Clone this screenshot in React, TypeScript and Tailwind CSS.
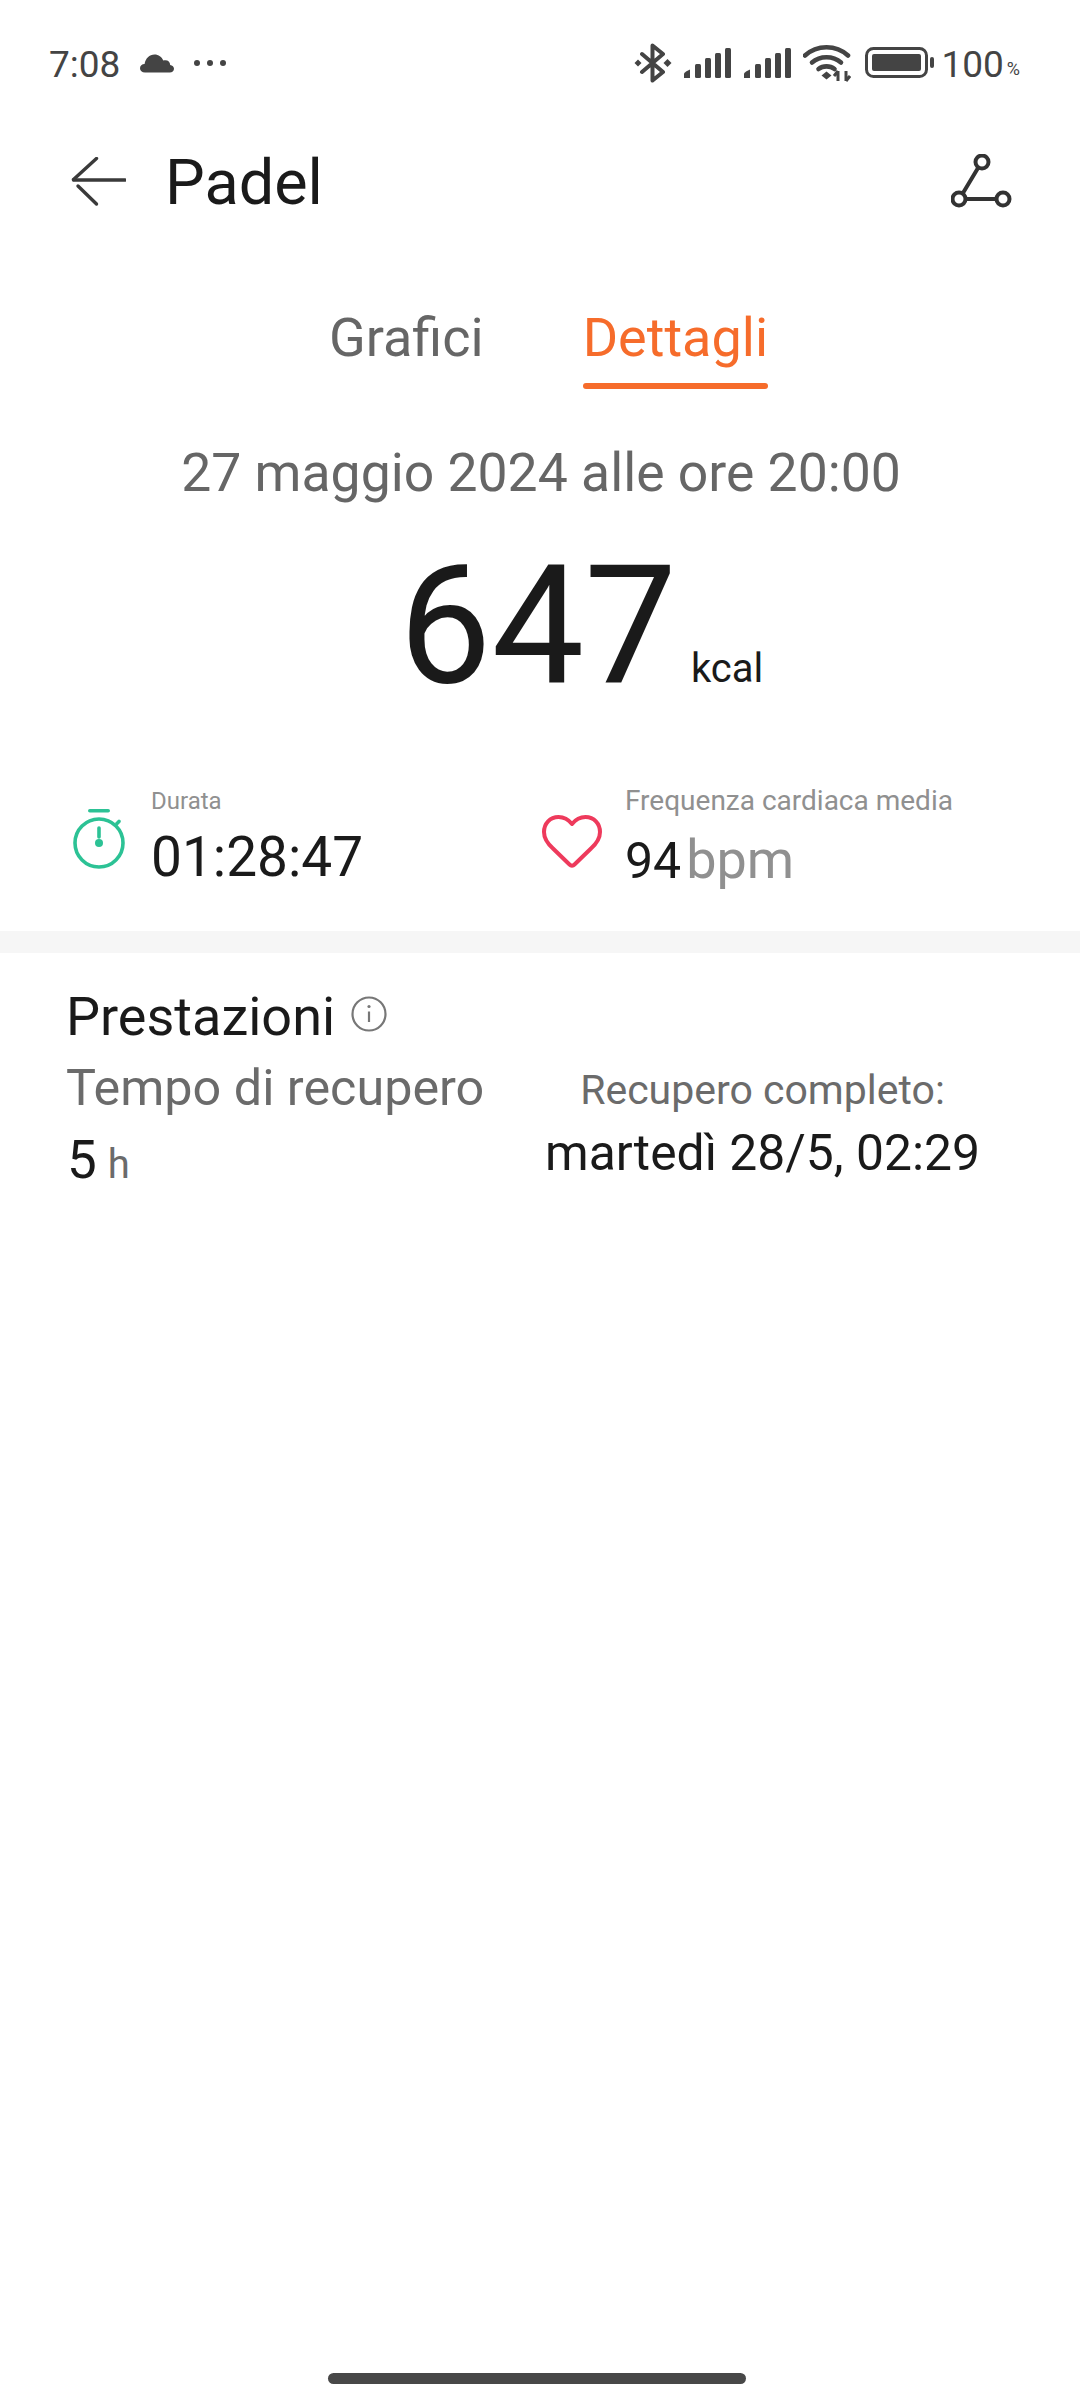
const font = "font-['Roboto',sans-serif]";

function Cloud() {
  return (
    <svg width="34" height="20" viewBox="0 0 34 20" className="text-[#444]">
      <path
        fill="currentColor"
        d="M5 19.5C2 19.5 0 17.6 0 15.2C0 12.8 2 11 4.6 11C5.4 5.6 9.4 1.5 14.5 1.5C18.6 1.5 21.8 3.9 23.3 7.6C24 7.3 24.7 7.2 25.4 7.2C28.2 7.2 30 9.3 30.2 11.9C32.4 12.2 34 13.7 34 15.7C34 17.9 32.2 19.5 29.8 19.5Z"
      />
    </svg>
  );
}

function Bluetooth() {
  return (
    <svg width="38" height="40" viewBox="0 0 38 40" fill="none">
      <path
        d="M8 11L29 29L18.5 37.5V2.5L29 11L8 29"
        stroke="#444"
        strokeWidth="4"
        strokeLinejoin="round"
        strokeLinecap="round"
      />
      <path d="M0.5 20L4 16.5L7.5 20L4 23.5Z M29.5 20L33.5 16L37.5 20L33.5 24Z" fill="#444" />
    </svg>
  );
}

function Signal() {
  return (
    <svg width="48" height="32" viewBox="0 0 48 32" fill="#444">
      <path d="M0 31V27C0 25.5 3.5 23.5 6 22.5V31Z" />
      <rect x="11" y="17" width="6" height="14" rx="1.5" />
      <rect x="21" y="11" width="6" height="20" rx="1.5" />
      <rect x="31" y="6" width="6" height="25" rx="1.5" />
      <rect x="41" y="1" width="6" height="30" rx="1.5" />
    </svg>
  );
}

function Wifi() {
  return (
    <svg width="48" height="38" viewBox="0 0 48 38" fill="none">
      <path d="M2 11.5C14 0.5 33 0.5 45 11.5" stroke="#444" strokeWidth="4.6" strokeLinecap="round" />
      <path d="M9 18.5C17 11.5 30 11.5 38 18.5" stroke="#444" strokeWidth="4.6" strokeLinecap="round" />
      <path d="M15.5 25C20 21.5 27 21.5 31.5 25" stroke="#444" strokeWidth="4.6" strokeLinecap="round" />
      <path d="M18.5 31.5L23.5 27.5L28.5 31.5L23.5 35.5Z" fill="#444" />
      <path d="M35 27V37M31 32L35 27M43 27V37M43 37L47 32" stroke="#444" strokeWidth="3" />
    </svg>
  );
}

function Battery() {
  return (
    <svg width="70" height="32" viewBox="0 0 70 32" fill="none">
      <rect x="1.5" y="1.5" width="60" height="28" rx="7" stroke="#444" strokeWidth="3" />
      <rect x="7" y="7" width="49" height="17" rx="2" fill="#444" />
      <rect x="65" y="10" width="4" height="11" rx="2" fill="#444" />
    </svg>
  );
}

function Back() {
  return (
    <svg width="56" height="50" viewBox="0 0 56 50" fill="none" stroke="#3a3a3a" strokeWidth="3.4" strokeLinecap="round">
      <path d="M3.5 23H55" />
      <path d="M3.5 22.5L26.5 1.5" />
      <path d="M8 29L26.5 47" />
    </svg>
  );
}

function Route() {
  return (
    <svg width="62" height="56" viewBox="0 0 62 56" fill="none" stroke="#333" strokeWidth="4">
      <circle cx="31" cy="8" r="6.5" />
      <circle cx="8" cy="45" r="6.5" />
      <circle cx="52" cy="45" r="6.5" />
      <path d="M27 14L12 39M14.5 45H45.5" />
    </svg>
  );
}

function Stopwatch() {
  return (
    <svg width="52" height="60" viewBox="0 0 52 60" fill="none" stroke="#2cc295">
      <rect x="15" y="0" width="22" height="3.6" rx="1.8" fill="#2cc295" stroke="none" />
      <circle cx="26" cy="34" r="24" strokeWidth="3.6" />
      <path d="M44 14.5L46 12.5" strokeWidth="3.6" strokeLinecap="round" />
      <path d="M26 19V28" strokeWidth="3.6" strokeLinecap="round" />
      <circle cx="26" cy="34" r="4" fill="#2cc295" stroke="none" />
    </svg>
  );
}

function Heart() {
  return (
    <svg width="62" height="56" viewBox="0 0 62 56" fill="none">
      <path
        d="M31 10C27 5 23 3 17.5 3C9 3 3 9.5 3 18C3 25 7 30 12 34.5L28.5 50.5C30 52 32 52 33.5 50.5L50 34.5C55 30 59 25 59 18C59 9.5 53 3 44.5 3C39 3 35 5 31 10Z"
        stroke="#ee3a5c"
        strokeWidth="4"
        strokeLinejoin="round"
      />
    </svg>
  );
}

function Info() {
  return (
    <svg width="36" height="36" viewBox="0 0 36 36" fill="none" stroke="#777">
      <circle cx="18" cy="18" r="16.5" strokeWidth="2.2" />
      <path d="M18 15.5V26" strokeWidth="2.2" />
      <circle cx="18" cy="10.5" r="1.6" fill="#777" stroke="none" />
    </svg>
  );
}

export default function App() {
  return (
    <div className={`flex h-[2400px] w-[1080px] flex-col overflow-hidden bg-white ${font}`}>
      <div className="flex h-[126px] items-center justify-between pl-[49px] pr-[60px]">
        <div className="flex items-center">
          <span className="mt-[3px] text-[37px] leading-none text-[#444]">7:08</span>
          <div className="ml-[20px]">
            <Cloud />
          </div>
          <div className="ml-[20px] flex gap-[7px]">
            <div className="h-[6px] w-[6px] rounded-full bg-[#444]"></div>
            <div className="h-[6px] w-[6px] rounded-full bg-[#444]"></div>
            <div className="h-[6px] w-[6px] rounded-full bg-[#444]"></div>
          </div>
        </div>
        <div className="flex items-center">
          <Bluetooth />
          <div className="ml-[12px]">
            <Signal />
          </div>
          <div className="ml-[12px]">
            <Signal />
          </div>
          <div className="ml-[11px]">
            <Wifi />
          </div>
          <div className="ml-[14px]">
            <Battery />
          </div>
          <span className="ml-[6px] mt-[3px] text-[37px] leading-none text-[#444]">100</span>
          <span className="ml-[3px] mt-[12px] text-[18px] leading-none text-[#444]">%</span>
        </div>
      </div>

      <div className="flex h-[112px] items-center justify-between pl-[70px] pr-[67px]">
        <div className="flex items-center">
          <Back />
          <span className="ml-[39px] text-[63px] leading-none text-[#1a1a1a]">Padel</span>
        </div>
        <Route />
      </div>

      <div className="mt-[66px] flex justify-center gap-[99px] pl-[17px]">
        <div className="text-[54px] leading-[68px] text-[#666]">Grafici</div>
        <div className="flex flex-col">
          <div className="pb-[11px] text-[54px] leading-[68px] text-[#f66c2b]">Dettagli</div>
          <div className="h-[6px] rounded-full bg-[#f66c2b]"></div>
        </div>
      </div>

      <div className="mt-[50px] pl-[2px] text-center text-[53.5px] leading-[68px] text-[#666]">
        27 maggio 2024 alle ore 20:00
      </div>

      <div className="mt-[33px] flex items-baseline justify-center pl-[82px]">
        <span className="text-[165px] leading-[172px] text-[#1a1a1a]">647</span>
        <span className="ml-[14px] text-[40px] leading-none text-[#1a1a1a]">kcal</span>
      </div>

      <div className="mt-[74px] flex h-[122px]">
        <div className="flex w-[538px] pl-[73px]">
          <div className="mt-[23px]">
            <Stopwatch />
          </div>
          <div className="ml-[26px]">
            <div className="text-[24px] leading-[30px] text-[#909090]">Durata</div>
            <div className="mt-[10px] text-[55px] leading-[62px] text-[#1a1a1a]">01:28:47</div>
          </div>
        </div>
        <div className="flex pl-[3px]">
          <div className="mt-[28px]">
            <Heart />
          </div>
          <div className="ml-[22px]">
            <div className="text-[28px] leading-[30px] text-[#909090]">Frequenza cardiaca media</div>
            <div className="mt-[13px] flex items-baseline">
              <span className="text-[50px] leading-[62px] text-[#1a1a1a]">94</span>
              <span className="ml-[5px] text-[54px] leading-[62px] text-[#909090]">bpm</span>
            </div>
          </div>
        </div>
      </div>

      <div className="mt-[23px] h-[22px] bg-[#f6f6f6]"></div>

      <div className="pl-[66px] pr-[100px] pt-[32px]">
        <div className="flex items-center">
          <span className="text-[54px] leading-[64px] text-[#1a1a1a]">Prestazioni</span>
          <div className="ml-[16px] mb-[6px]">
            <Info />
          </div>
        </div>
        <div className="mt-[7px] flex justify-between">
          <div>
            <div className="text-[50.3px] leading-[64px] text-[#6b6b6b]">Tempo di recupero</div>
            <div className="mt-[8px] flex items-baseline pl-[1px]">
              <span className="text-[53px] leading-[64px] text-[#1a1a1a]">5</span>
              <span className="ml-[11px] text-[40px] leading-[64px] text-[#6b6b6b]">h</span>
            </div>
          </div>
          <div className="flex flex-col items-center">
            <div className="pt-[3px] text-[41px] leading-[62px] text-[#6b6b6b]">Recupero completo:</div>
            <div className="text-[49.8px] leading-[64px] text-[#1a1a1a]">martedì 28/5, 02:29</div>
          </div>
        </div>
      </div>

      <div className="mt-auto mb-[16px] ml-[328px] h-[11px] w-[418px] rounded-full bg-[#484848]"></div>
    </div>
  );
}
